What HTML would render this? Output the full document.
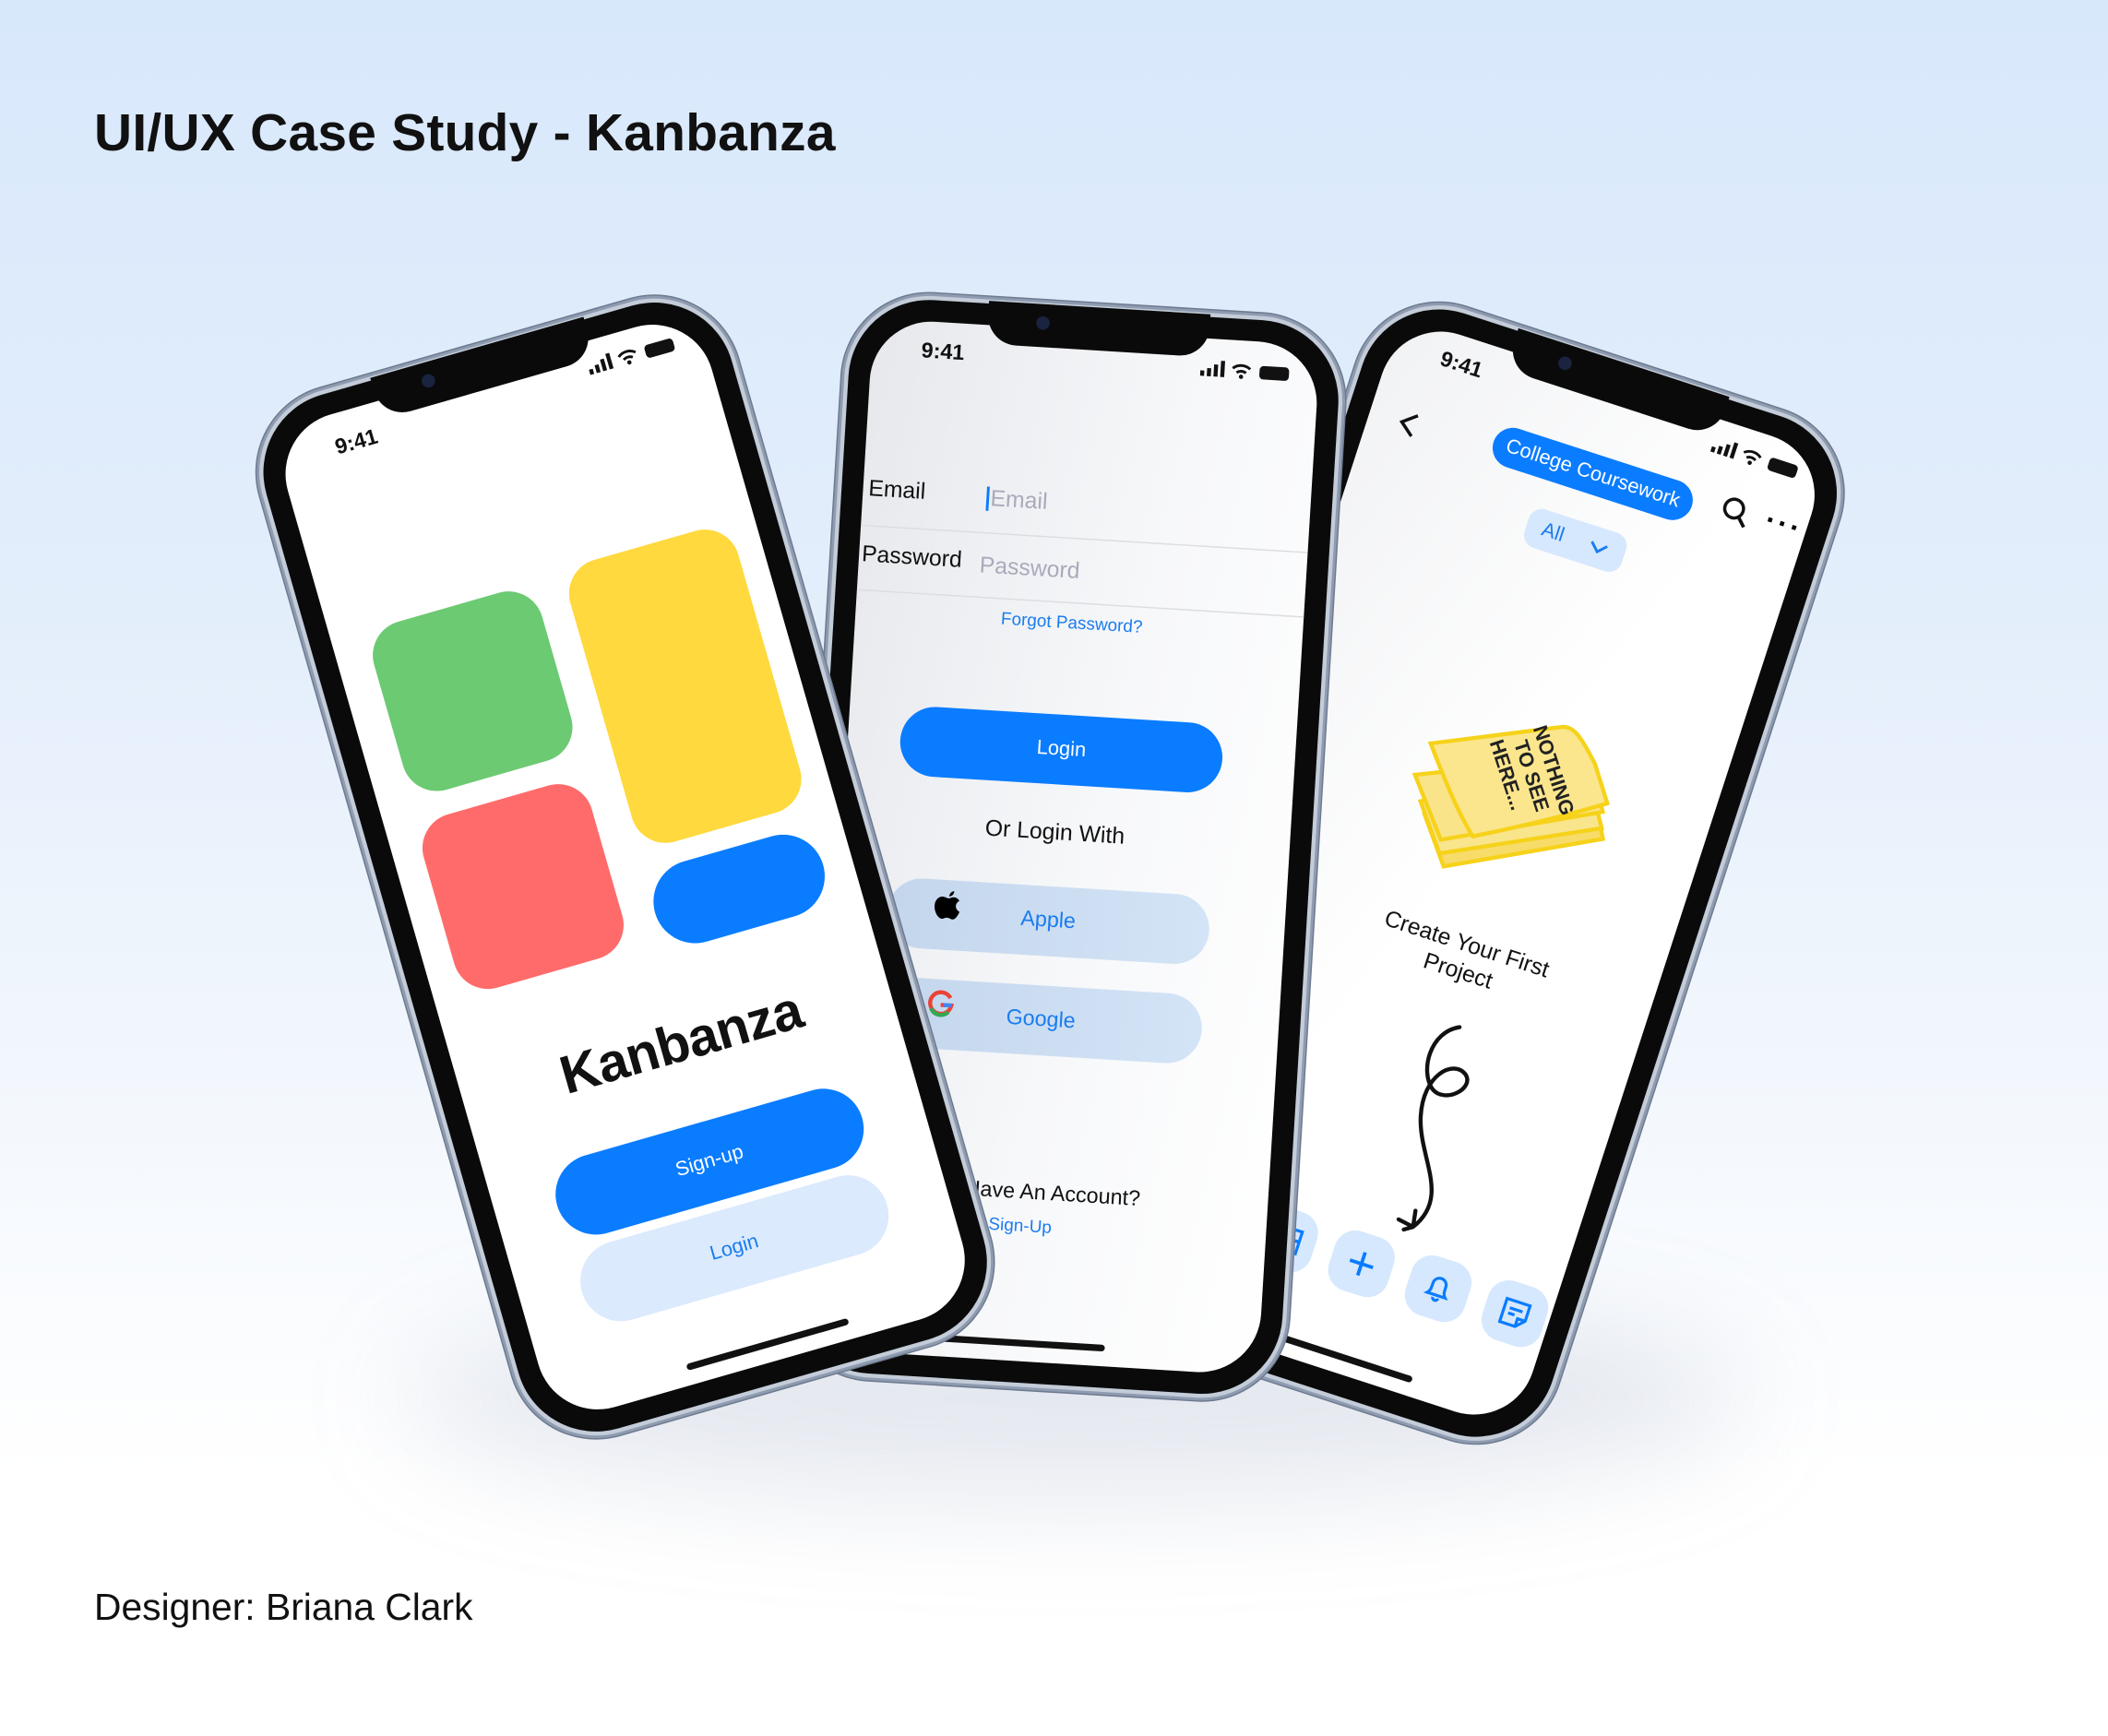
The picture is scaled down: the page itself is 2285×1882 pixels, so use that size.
<!DOCTYPE html>
<html><head><meta charset="utf-8">
<style>
*{margin:0;padding:0;box-sizing:border-box}
html,body{width:2285px;height:1882px;overflow:hidden}
body{background:linear-gradient(180deg,#d8e8fb 0%,#e3eefb 35%,#f4f8fd 65%,#ffffff 85%);font-family:"Liberation Sans",sans-serif}
#w{position:absolute;left:0;top:0;width:1568px;height:1291px;transform:scale(1.4573);transform-origin:0 0}
.title{position:absolute;left:70px;top:78px;font-size:39px;font-weight:700;color:#111;letter-spacing:0.2px}
.des{position:absolute;left:70px;top:1180px;font-size:28px;color:#111}
.shadow{position:absolute;left:300px;top:960px;width:1000px;height:160px;border-radius:50%;background:rgba(120,140,170,.18);filter:blur(40px)}
.phone{position:absolute;background:#0a0a0a;border-radius:60px;box-shadow:0 0 0 3px #c3ccd8,0 0 0 5px #8e9bb0,0 0 0 6px #6d7a8e}
.screen{position:absolute;left:16px;top:16px;right:16px;bottom:16px;border-radius:46px;background:#fff;overflow:hidden}
.notch{position:absolute;left:50%;top:-2px;width:165px;height:32px;margin-left:-82px;background:#0a0a0a;border-radius:0 0 22px 22px}
.notch i{position:absolute;left:36px;top:9px;width:10px;height:10px;border-radius:50%;background:#1a2340}
.abs{position:absolute}
.time{position:absolute;font-size:16px;font-weight:700;color:#111;transform:translate(-50%,-50%)}
.ind{position:absolute;height:5px;width:125px;border-radius:3px;background:#111;transform:translateX(-50%)}
.c{transform:translate(-50%,-50%);white-space:nowrap}
</style></head><body>
<div id="w">
<div class="title">UI/UX Case Study - Kanbanza</div>
<div class="des">Designer: Briana Clark</div>
<div class="shadow"></div>

<!-- RIGHT PHONE -->
<div class="phone" style="left:900px;top:252px;width:368px;height:795px;transform:rotate(18deg)">
 <div class="screen" style="background:linear-gradient(110deg,#f1f2f4 0%,#fff 50%)">
  <div class="time" style="left:54px;top:22px">9:41</div>
  <svg class="abs" style="left:250px;top:12px" width="70" height="16" viewBox="0 0 70 16"><rect x="0" y="9" width="3" height="4" fill="#111"/><rect x="5" y="7" width="3" height="6" fill="#111"/><rect x="10" y="4" width="3" height="9" fill="#111"/><rect x="15" y="1" width="3" height="12" fill="#111"/><path d="M24 6a10 10 0 0 1 13 0M27 9a6 6 0 0 1 7 0" stroke="#111" stroke-width="2" fill="none"/><circle cx="30.5" cy="12" r="1.6" fill="#111"/><rect x="44" y="3" width="22" height="10" rx="3" fill="#111"/></svg>
  <svg class="abs" style="left:20px;top:64px" width="20" height="22"><path d="M15 3L5 11l10 8" stroke="#111" stroke-width="2.4" fill="none"/></svg>
  <div class="abs c" style="left:172px;top:68px;width:155px;height:30px;border-radius:15px;background:#0a7cff;color:#fff;font-size:15px;line-height:30px;text-align:center">College Coursework</div>
  <div class="abs c" style="left:175px;top:119px;width:76px;height:30px;border-radius:10px;background:#d6e8fd;color:#1a7cf0;font-size:15px;line-height:30px;padding-left:12px">All <svg style="position:absolute;left:48px;top:10px" width="16" height="10"><path d="M2 2l6 6 6-6" stroke="#1a7cf0" stroke-width="2" fill="none"/></svg></div>
  <svg class="abs" style="left:270px;top:50px" width="24" height="24"><circle cx="10" cy="10" r="7" stroke="#111" stroke-width="2.4" fill="none"/><path d="M15 15l6 6" stroke="#111" stroke-width="2.6"/></svg>
  <div class="abs c" style="left:319px;top:60px;font-size:22px;font-weight:700;letter-spacing:2px">&middot;&middot;&middot;</div>
  <svg class="abs" style="left:110px;top:245px" width="160" height="145" viewBox="0 0 160 145">
   <g transform="rotate(-24 80 72)">
   <path d="M14 76l10 40 120 -8 -4 -45z" fill="#f7dc6a" stroke="#f6d21a" stroke-width="3"/>
   <path d="M12 66l10 40 122 -6 -6 -40z" fill="#f9e58c" stroke="#f6d21a" stroke-width="3"/>
   <path d="M10 46l14 50 122 -8 -6 -42z" fill="#fae48a" stroke="#f6d21a" stroke-width="3"/>
   <path d="M24 24l98 -2 c10 0 14 10 22 30 l6 30 c-20 4 -60 10 -102 14 c-10 -20 -18 -50 -24 -72z" fill="#fbe68e" stroke="#f6d21a" stroke-width="3"/>
   </g>
   <g transform="rotate(54 90 55)" font-family="Liberation Sans" font-size="15" fill="#222" font-weight="700">
    <text x="52" y="42">NOTHING</text><text x="58" y="59">TO SEE</text><text x="52" y="76">HERE...</text>
   </g>
  </svg>
  <div class="abs c" style="left:191px;top:440px;font-size:17px;text-align:center;line-height:21px;color:#111">Create Your First<br>Project</div>
  <svg class="abs" style="left:175px;top:485px" width="80" height="165" viewBox="0 0 80 165"><path d="M30 5c-20 10 -18 40 -5 50c12 8 30 -10 20 -18c-12 -8 -30 10 -22 40c8 30 40 50 20 80l-6 4m6 -4l-12 -2m12 2l-2 -12" stroke="#111" stroke-width="3" fill="none" stroke-linecap="round"/></svg>
  <div class="abs c" style="left:130px;top:680px;width:46px;height:46px;border-radius:16px;background:#d6e8fd"><svg style="position:absolute;left:11px;top:13px" width="24" height="20"><rect x="1" y="1" width="22" height="17" fill="none" stroke="#0a7cff" stroke-width="2.4"/><path d="M8 1v17M15 1v17M1 9h22" stroke="#0a7cff" stroke-width="2.4"/></svg></div>
  <div class="abs c" style="left:190px;top:680px;width:46px;height:46px;border-radius:16px;background:#d6e8fd"><svg style="position:absolute;left:11px;top:11px" width="24" height="24"><path d="M12 3v18M3 12h18" stroke="#0a7cff" stroke-width="2.6"/></svg></div>
  <div class="abs c" style="left:250px;top:680px;width:46px;height:46px;border-radius:16px;background:#d6e8fd"><svg style="position:absolute;left:12px;top:11px" width="22" height="24"><path d="M4 17c2-2 2-4 2-8a5 5 0 0 1 10 0c0 4 0 6 2 8z M9 19a2 2 0 0 0 4 0" stroke="#0a7cff" stroke-width="2.2" fill="none"/></svg></div>
  <div class="abs c" style="left:310px;top:680px;width:46px;height:46px;border-radius:16px;background:#d6e8fd"><svg style="position:absolute;left:12px;top:12px" width="22" height="22"><path d="M2 2h18v12l-6 6H2z M14 20v-6h6 M6 8h10M6 12h5" stroke="#0a7cff" stroke-width="2.2" fill="none"/></svg></div>
  <div class="ind" style="left:190px;top:748px"></div>
 </div>
 <div class="notch"><i></i></div>
</div>

<!-- MIDDLE PHONE -->
<div class="phone" style="left:610px;top:230px;width:365px;height:800px;transform:rotate(3.5deg)">
 <div class="screen" style="background:linear-gradient(100deg,#e6e8ec 0%,#f7f8fa 55%,#fff 100%)">
  <div class="time" style="left:53px;top:23px">9:41</div>
  <svg class="abs" style="left:245px;top:15px" width="70" height="16" viewBox="0 0 70 16"><rect x="0" y="9" width="3" height="4" fill="#111"/><rect x="5" y="7" width="3" height="6" fill="#111"/><rect x="10" y="4" width="3" height="9" fill="#111"/><rect x="15" y="1" width="3" height="12" fill="#111"/><path d="M24 6a10 10 0 0 1 13 0M27 9a6 6 0 0 1 7 0" stroke="#111" stroke-width="2" fill="none"/><circle cx="30.5" cy="12" r="1.6" fill="#111"/><rect x="44" y="3" width="22" height="10" rx="3" fill="#111"/></svg>
  <div class="abs" style="left:4px;top:117px;font-size:17px;color:#111">Email</div>
  <div class="abs" style="left:92px;top:120px;font-size:17px;color:#aab;border-left:2px solid #0a7cff;padding-left:1px;line-height:18px">Email</div>
  <div class="abs" style="left:0;top:154px;width:340px;height:1px;background:#dcdde1"></div>
  <div class="abs" style="left:2px;top:166px;font-size:17px;color:#111">Password</div>
  <div class="abs" style="left:90px;top:169px;font-size:17px;color:#aab">Password</div>
  <div class="abs" style="left:0;top:202px;width:340px;height:1px;background:#dcdde1"></div>
  <div class="abs c" style="left:161px;top:217px;font-size:13px;color:#1a7cf0">Forgot Password?</div>
  <div class="abs c" style="left:159px;top:312px;width:240px;height:52px;border-radius:26px;background:#0a7cff;color:#fff;font-size:15px;line-height:52px;text-align:center">Login</div>
  <div class="abs c" style="left:158px;top:374px;font-size:17px;color:#111">Or Login With</div>
  <div class="abs c" style="left:157px;top:440px;width:240px;height:52px;border-radius:26px;background:linear-gradient(90deg,#c4d6ec,#d3e4f7);color:#1a7cf0;font-size:16px;line-height:52px;text-align:center">Apple</div>
  <svg class="abs" style="left:72px;top:421px" width="20" height="24" viewBox="0 0 20 24"><path d="M14 1c0 2-1.5 4-3.5 4 0-2 1.5-4 3.5-4zM10 6.5c1.5 0 2.5-1 4-1 2 0 3.5 1.2 4.2 2.5-3.5 2-3 6.5.6 8-1 2.8-2.8 6-4.8 6-1.5 0-2-1-4-1s-2.6 1-4 1C3 22 0 17 0 12.5 0 8 3 5.5 5.6 5.5c1.8 0 3 1 4.4 1z" fill="#000"/></svg>
  <div class="abs c" style="left:156px;top:514px;width:240px;height:52px;border-radius:26px;background:linear-gradient(90deg,#c4d6ec,#d3e4f7);color:#1a7cf0;font-size:16px;line-height:52px;text-align:center">Google</div>
  <svg class="abs" style="left:70px;top:495px" width="22" height="22" viewBox="0 0 22 22"><path d="M18 6.5A8 8 0 1 0 19 12H11" stroke="#ea4335" stroke-width="3" fill="none"/><path d="M4 15a8 8 0 0 0 13 2" stroke="#34a853" stroke-width="3" fill="none"/><path d="M19 12h-6" stroke="#4285f4" stroke-width="3" fill="none"/></svg>
  <div class="abs c" style="left:152px;top:643px;font-size:16px;color:#111">Don't Have An Account?</div>
  <div class="abs c" style="left:150px;top:667px;font-size:13px;color:#1a7cf0">Sign-Up</div>
  <div class="ind" style="left:156px;top:752px"></div>
 </div>
 <div class="notch"><i></i></div>
</div>

<!-- LEFT PHONE -->
<div class="phone" style="left:285px;top:245px;width:360px;height:800px;transform:rotate(-16deg)">
 <div class="screen">
  <div class="time" style="left:59px;top:26px">9:41</div>
  <svg class="abs" style="left:240px;top:12px" width="70" height="16" viewBox="0 0 70 16"><rect x="0" y="9" width="3" height="4" fill="#111"/><rect x="5" y="7" width="3" height="6" fill="#111"/><rect x="10" y="4" width="3" height="9" fill="#111"/><rect x="15" y="1" width="3" height="12" fill="#111"/><path d="M24 6a10 10 0 0 1 13 0M27 9a6 6 0 0 1 7 0" stroke="#111" stroke-width="2" fill="none"/><circle cx="30.5" cy="12" r="1.6" fill="#111"/><rect x="44" y="3" width="22" height="10" rx="3" fill="#111"/></svg>
  <div class="abs" style="left:26px;top:162px;width:130px;height:130px;border-radius:26px;background:#6cca72"></div>
  <div class="abs" style="left:179px;top:158px;width:130px;height:218px;border-radius:26px;background:#ffd93d"></div>
  <div class="abs" style="left:22px;top:310px;width:130px;height:134px;border-radius:26px;background:#ff6b6b"></div>
  <div class="abs" style="left:176px;top:392px;width:130px;height:62px;border-radius:31px;background:#0a7cff"></div>
  <div class="abs c" style="left:168px;top:522px;font-size:40px;font-weight:900;color:#111;letter-spacing:-0.5px">Kanbanza</div>
  <div class="abs c" style="left:164px;top:612px;width:236px;height:60px;border-radius:30px;background:#0a7cff;color:#fff;font-size:15px;line-height:60px;text-align:center">Sign-up</div>
  <div class="abs c" style="left:164px;top:679px;width:236px;height:60px;border-radius:30px;background:#dbeafd;color:#1a7cf0;font-size:15px;line-height:60px;text-align:center">Login</div>
  <div class="ind" style="left:168px;top:752px"></div>
 </div>
 <div class="notch"><i></i></div>
</div>
</div>
</body></html>
